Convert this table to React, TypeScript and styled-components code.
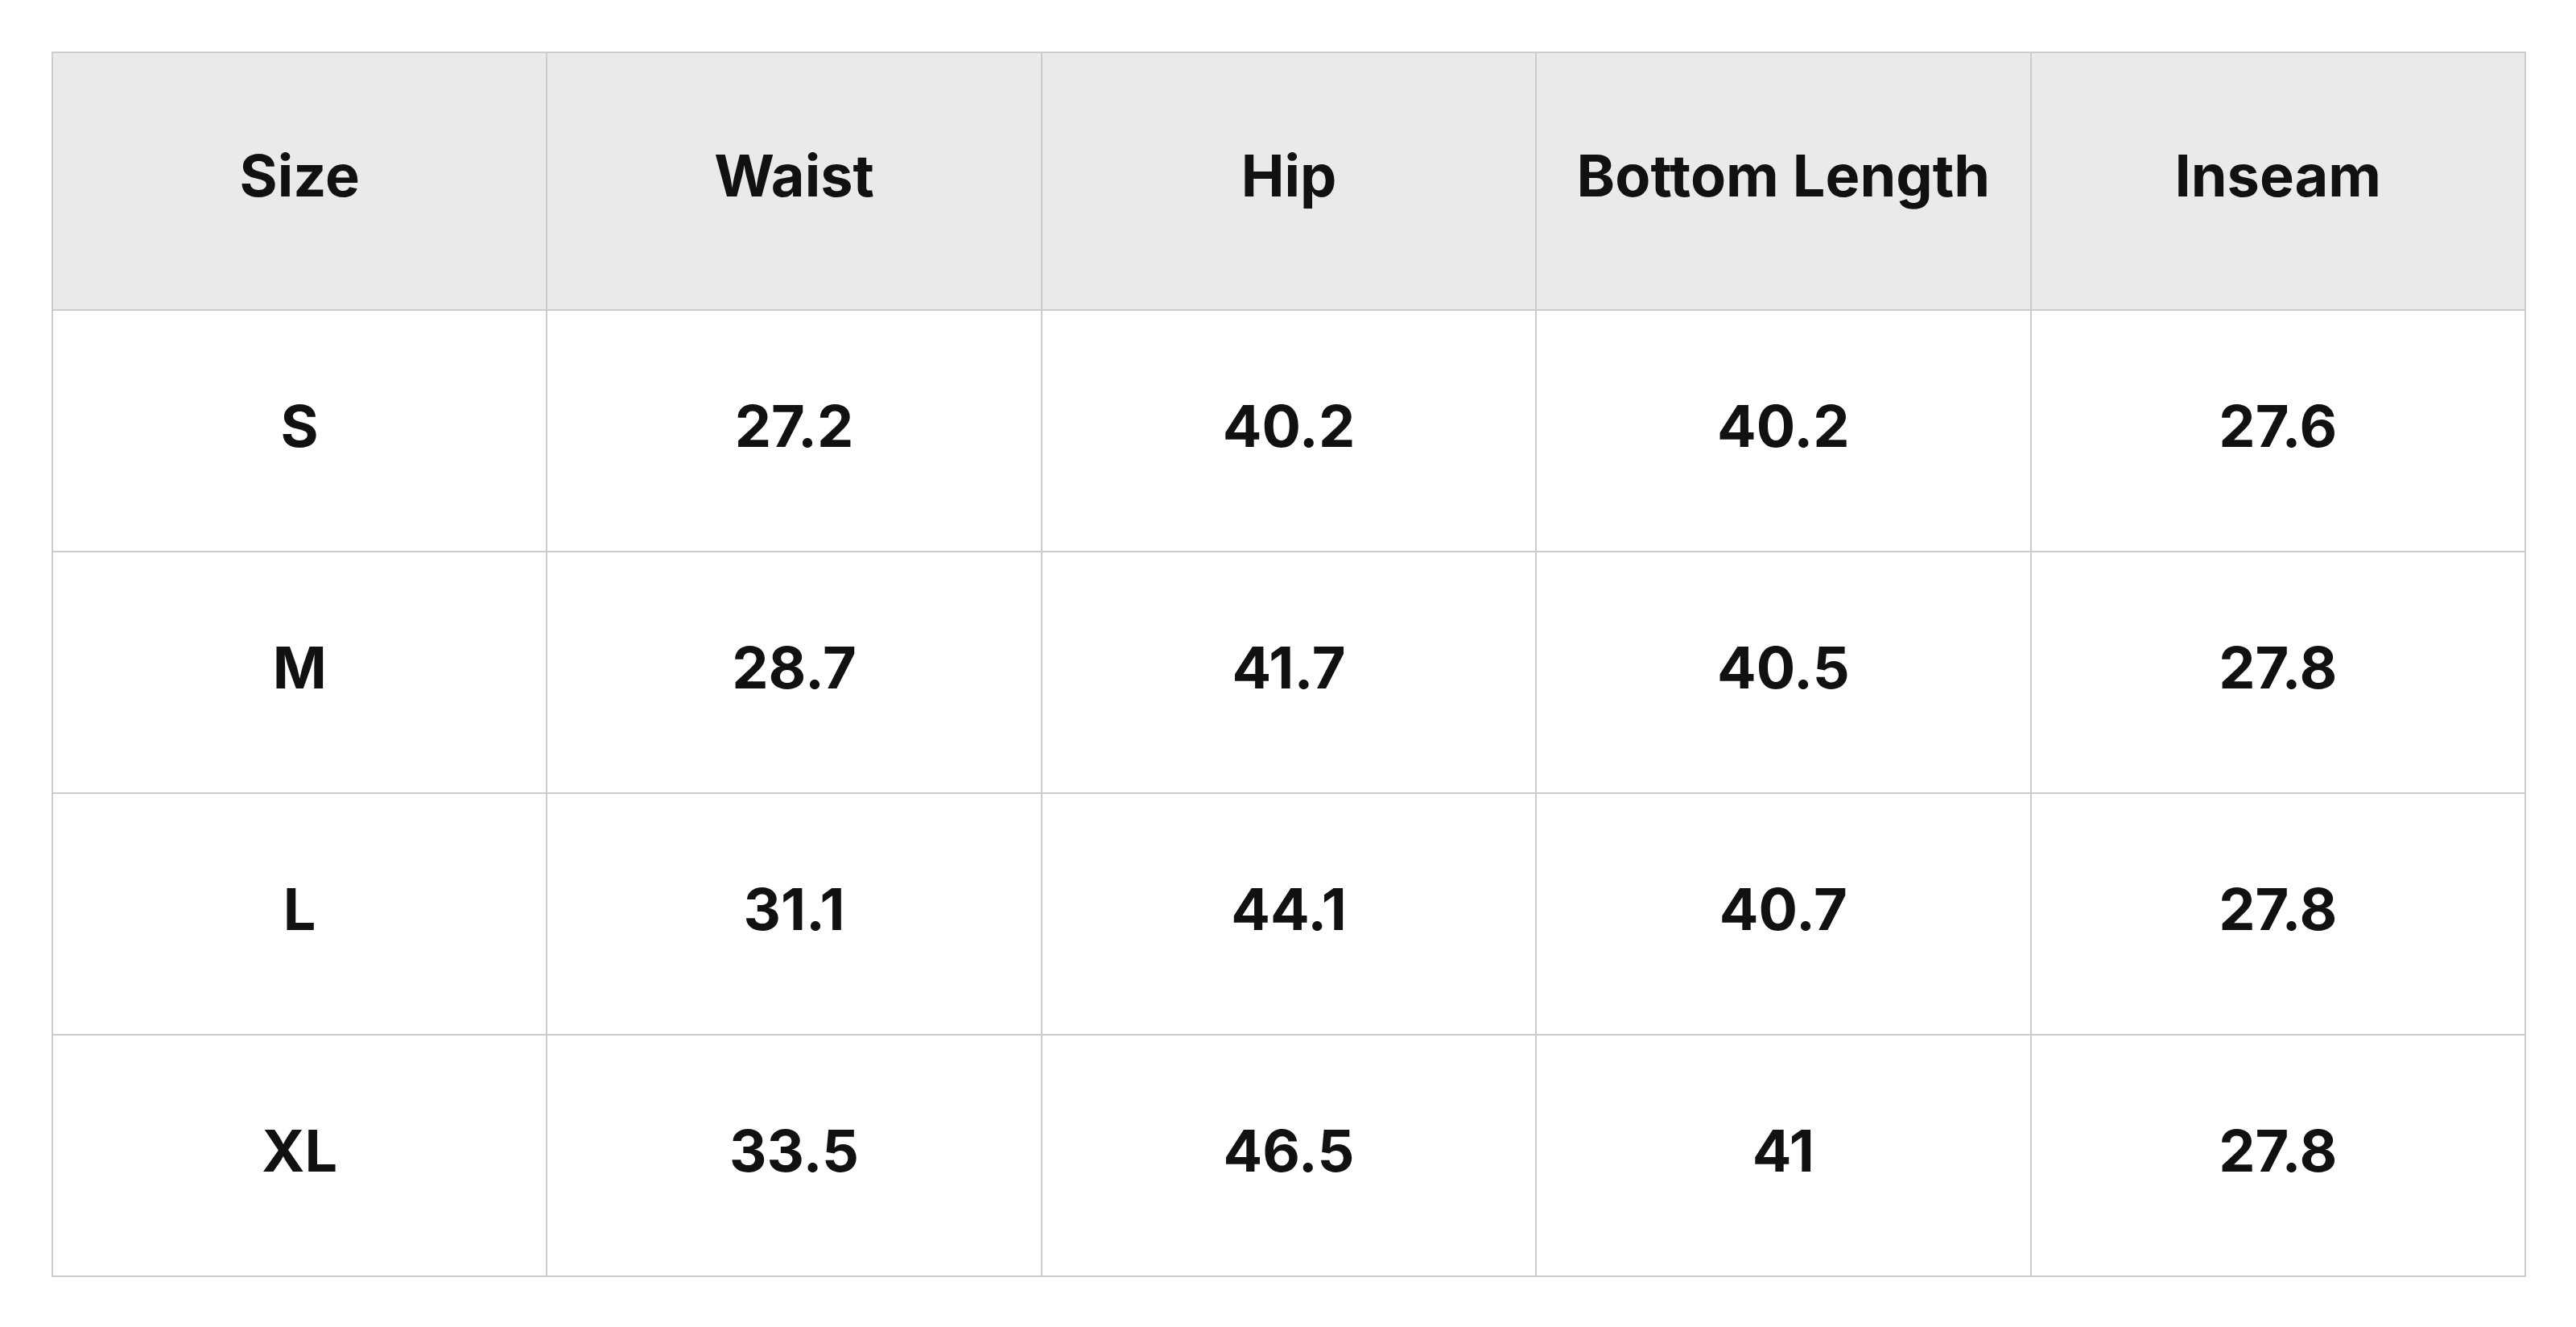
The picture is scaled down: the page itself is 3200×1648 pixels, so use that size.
import React from "react";
import styled, { createGlobalStyle } from "styled-components";

const GlobalStyle = createGlobalStyle`
  html, body {
    margin: 0;
    padding: 0;
    background: #ffffff;
  }
  body {
    font-family: Inter, "Noto Sans", "Liberation Sans", sans-serif;
    color: #111111;
  }
`;

const Page = styled.div`
  padding: 64px;
`;

const Table = styled.table`
  width: 3074px;
  border-collapse: separate;
  border-spacing: 0;
  table-layout: fixed;
  border-top: 2px solid #cccccc;
  border-left: 2px solid #cccccc;
`;

const HeadCell = styled.th`
  box-sizing: border-box;
  height: 320px;
  padding: 0 0 16px;
  background: #eaeaea;
  border-right: 2px solid #cccccc;
  border-bottom: 2px solid #cccccc;
  font-size: 72px;
  font-weight: 700;
  text-align: center;
  vertical-align: middle;
  color: #111111;
`;

const Cell = styled.td`
  box-sizing: border-box;
  height: 300px;
  padding: 0 0 14px;
  background: #ffffff;
  border-right: 2px solid #cccccc;
  border-bottom: 2px solid #cccccc;
  font-size: 72px;
  font-weight: 700;
  text-align: center;
  vertical-align: middle;
  color: #111111;
`;

const headers = ["Size", "Waist", "Hip", "Bottom Length", "Inseam"];
const rows = [
  ["S", "27.2", "40.2", "40.2", "27.6"],
  ["M", "28.7", "41.7", "40.5", "27.8"],
  ["L", "31.1", "44.1", "40.7", "27.8"],
  ["XL", "33.5", "46.5", "41", "27.8"],
];

export default function App() {
  return (
    <>
      <GlobalStyle />
      <Page>
        <Table>
          <thead>
            <tr>
              {headers.map((h) => (
                <HeadCell key={h}>{h}</HeadCell>
              ))}
            </tr>
          </thead>
          <tbody>
            {rows.map((r) => (
              <tr key={r[0]}>
                {r.map((v, i) => (
                  <Cell key={i}>{v}</Cell>
                ))}
              </tr>
            ))}
          </tbody>
        </Table>
      </Page>
    </>
  );
}
